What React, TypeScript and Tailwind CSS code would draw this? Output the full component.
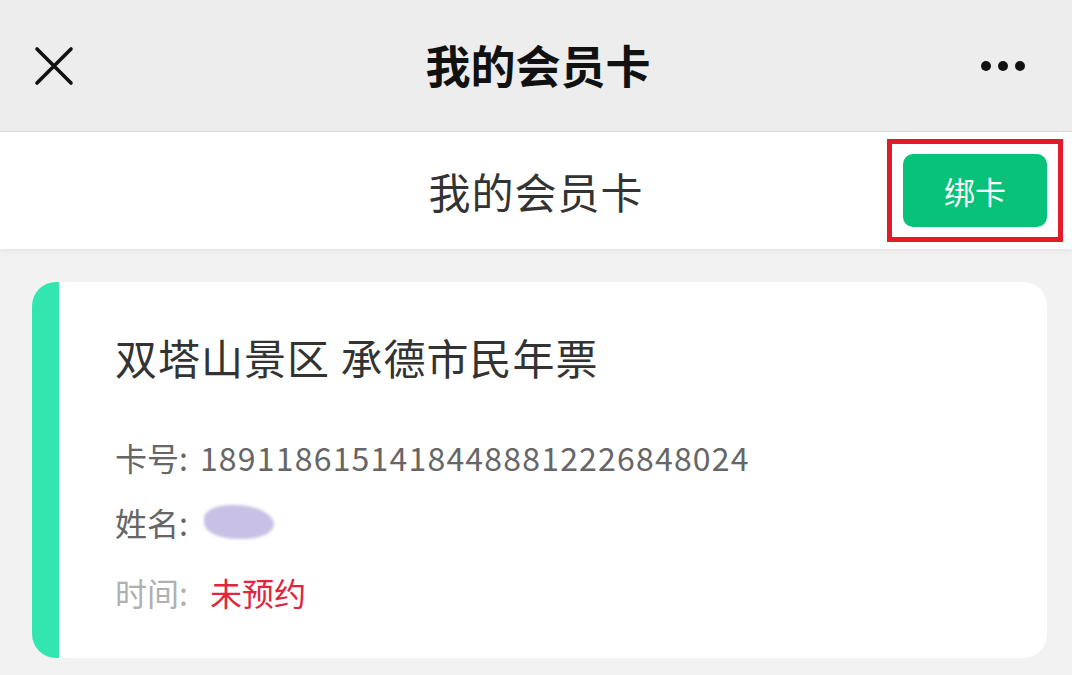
import React from "react";

const font = { fontFamily: '"Noto Sans CJK SC", "Noto Sans", sans-serif' };

function CloseIcon() {
  return (
    <svg width="40" height="40" viewBox="0 0 40 40" fill="none">
      <path d="M3 3L37 37M37 3L3 37" stroke="#111" strokeWidth="3.6" strokeLinecap="round" />
    </svg>
  );
}

function MoreIcon() {
  return (
    <svg width="50" height="12" viewBox="0 0 50 12">
      <circle cx="6" cy="6" r="5" fill="#111" />
      <circle cx="23" cy="6" r="5" fill="#111" />
      <circle cx="40" cy="6" r="5" fill="#111" />
    </svg>
  );
}

export default function App() {
  return (
    <div className="w-[1072px] h-[675px] overflow-hidden bg-[#f2f2f2] flex flex-col" style={font}>
      {/* 顶部导航 */}
      <div className="h-[132px] bg-[#ededed] grid grid-cols-[1fr_auto_1fr] items-center border-b border-[#dcdcdc]">
        <div className="pl-[34px] flex items-center">
          <CloseIcon />
        </div>
        <div className="text-[45px] font-bold text-[#111] leading-none pb-[2px] pl-[4px]">我的会员卡</div>
        <div className="flex justify-end pr-[42px]">
          <MoreIcon />
        </div>
      </div>

      {/* 标题栏 */}
      <div className="h-[117px] bg-white grid grid-cols-[1fr_auto_1fr] items-center shadow-[0_2px_6px_rgba(0,0,0,0.06)]">
        <div />
        <div className="text-[42px] text-[#333] leading-none tracking-[1px]">我的会员卡</div>
        <div className="flex justify-end pr-[9px]">
          <div className="border-[5px] border-[#e3192c] px-[11px] py-[10px]">
            <button className="w-[144px] h-[73px] rounded-[10px] bg-[#08c27a] text-white text-[31px] leading-none">
              绑卡
            </button>
          </div>
        </div>
      </div>

      {/* 会员卡 */}
      <div className="mt-[33px] mr-[25px] ml-[32px] h-[376px] rounded-[24px] bg-white overflow-hidden flex">
        <div className="w-[27px] bg-[#33e6b0] shrink-0" />
        <div className="flex flex-col pl-[56px]">
          <div className="mt-[50px] h-[50px] flex items-center text-[42px] text-[#333] leading-none tracking-[1px]">
            双塔山景区 承德市民年票
          </div>
          <div className="mt-[55px] h-[40px] flex items-center text-[32px] text-[#666] leading-none">
            <span>卡号:</span>
            <span className="ml-[12px] tracking-[1.2px]">18911861514184488812226848024</span>
          </div>
          <div className="mt-[25px] h-[40px] flex items-center text-[32px] text-[#666] leading-none">
            <span>姓名:</span>
            <span className="ml-[16px] w-[70px] h-[34px] rounded-[40%_60%_45%_50%] bg-[#c8c1e5] blur-[1.5px]" />
          </div>
          <div className="mt-[30px] h-[40px] flex items-center text-[32px] leading-none">
            <span className="text-[#b0b0b0]">时间:</span>
            <span className="ml-[22px] text-[#e0253d]">未预约</span>
          </div>
        </div>
      </div>
    </div>
  );
}
